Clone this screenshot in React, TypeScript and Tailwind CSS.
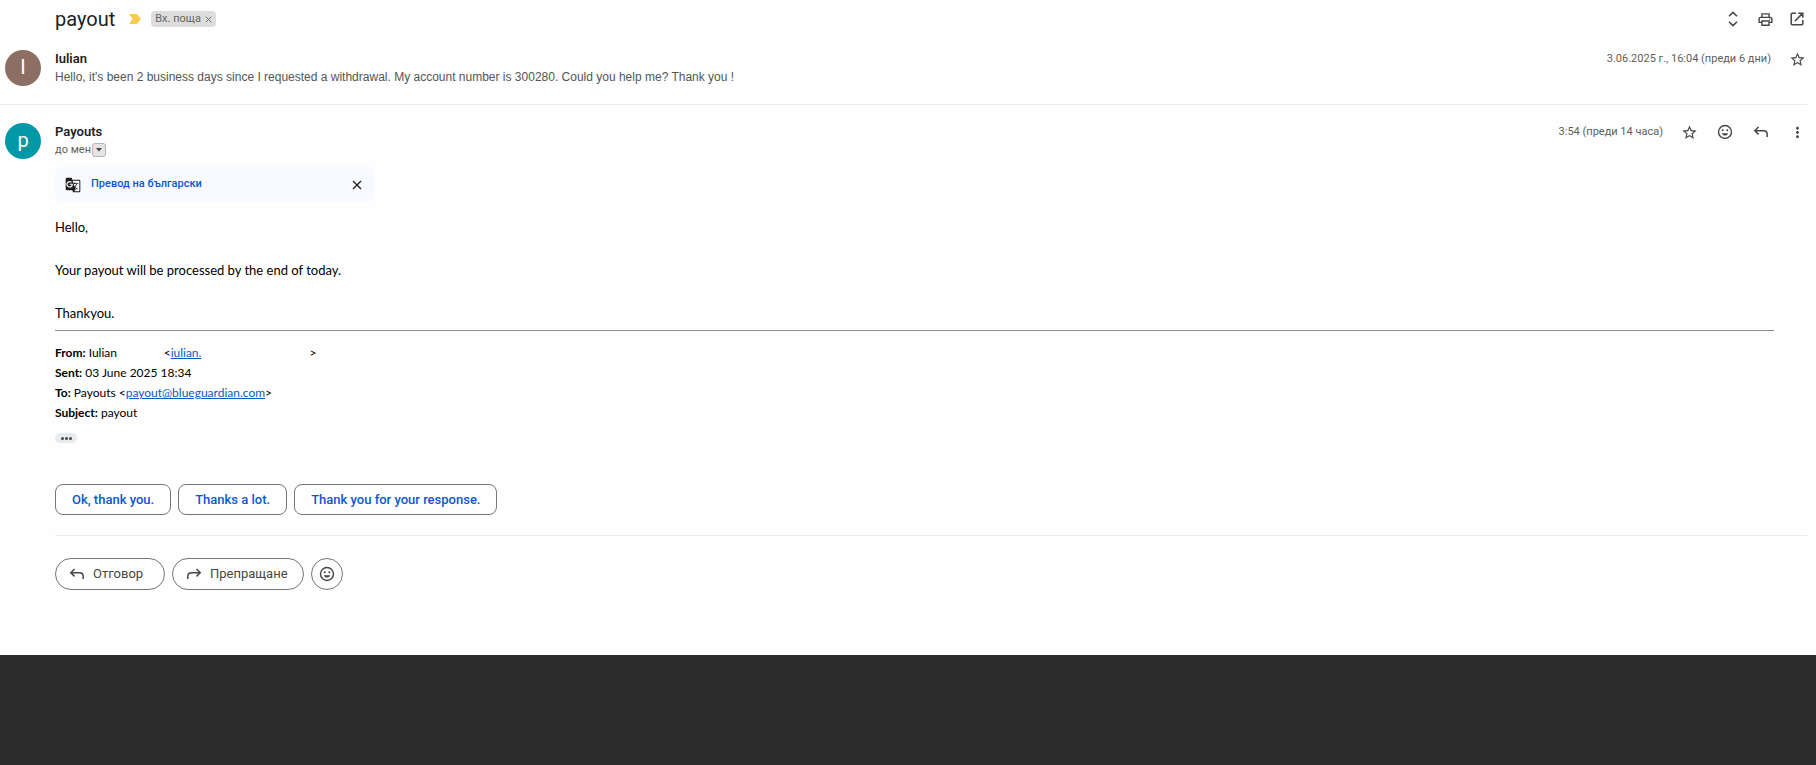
import type { ReactNode } from 'react';
import { MdGTranslate, MdMoreVert, MdOutlinePrint, MdStarBorder } from 'react-icons/md';

const uiFont = "font-['Roboto','Open_Sans',sans-serif]";
const mailFont = "font-['Lato','Liberation_Sans',sans-serif]";

const quickReplies = ['Ok, thank you.', 'Thanks a lot.', 'Thank you for your response.'];

const ReplyIcon = ({ flip = false }: { flip?: boolean }) => (
  <svg
    viewBox="0 0 20 20"
    className={flip ? 'size-5 -scale-x-100' : 'size-5'}
    fill="none"
    stroke="currentColor"
    strokeWidth="1.5"
    aria-hidden="true"
  >
    <path d="M7.5 5 3.8 8.7l3.7 3.7M4 8.7h8.5c2.2 0 3.7 1.5 3.7 3.7V15" />
  </svg>
);

const UnfoldIcon = () => (
  <svg viewBox="0 0 20 20" className="size-5" fill="none" stroke="currentColor" strokeWidth="1.5" aria-hidden="true">
    <path d="M6 7.2 10 3.4l4 3.8M6 12.8l4 3.8 4-3.8" />
  </svg>
);

const OpenIcon = () => (
  <svg viewBox="0 0 20 20" className="size-5" fill="none" stroke="currentColor" strokeWidth="1.5" aria-hidden="true">
    <path d="M9 4.2H5.2a1 1 0 0 0-1 1v9.6a1 1 0 0 0 1 1h9.6a1 1 0 0 0 1-1V11M11.2 4.2h4.6v4.6M15.6 4.4 8 12" />
  </svg>
);

const EmojiIcon = () => (
  <svg viewBox="0 0 20 20" className="size-5" aria-hidden="true">
    <circle cx="10" cy="10" r="6.5" fill="none" stroke="currentColor" strokeWidth="1.4" />
    <circle cx="7.7" cy="8.2" r="1" fill="currentColor" />
    <circle cx="12.3" cy="8.2" r="1" fill="currentColor" />
    <path d="M6.8 11.2h6.4c-.6 1.500-1.700 2.300-3.200 2.300s-2.600-.8-3.200-2.300z" fill="currentColor" />
  </svg>
);

const CloseIcon = ({ className }: { className: string }) => (
  <svg viewBox="0 0 10 10" className={className} fill="none" stroke="currentColor" strokeWidth="1.3" aria-hidden="true">
    <path d="m1 1 8 8M9 1 1 9" />
  </svg>
);

const ImportantIcon = () => (
  <svg viewBox="0 0 12 10" className="h-[10px] w-3" aria-hidden="true">
    <path d="M0 0h7.5a1 1 0 0 1 .8.4L12 5 8.3 9.6a1 1 0 0 1-.8.4H0l3.6-5z" fill="#f7cb4d" />
  </svg>
);

const IconButton = ({ label, children }: { label: string; children: ReactNode }) => (
  <button type="button" aria-label={label} className="flex size-5 items-center justify-center text-[#444746]">
    {children}
  </button>
);

const Avatar = ({ letter, color }: { letter: string; color: string }) => (
  <div className={`flex size-9 shrink-0 items-center justify-center rounded-full pb-[2px] text-xl text-white ${color}`}>
    {letter}
  </div>
);

const App = () => {
  return (
    <div lang="bg" className={`flex min-h-screen flex-col bg-[#2b2b2b] text-[#1f1f1f] ${uiFont}`}>
      <main className="bg-[#fefefe] pr-[9px] pb-[65px]">
        <header className="flex h-[38px] items-center pl-[55px]">
          <h1 className="text-xl leading-6">payout</h1>
          <span className="ml-[14px]">
            <ImportantIcon />
          </span>
          <div className="ml-[10px] flex h-4 items-center gap-1 rounded bg-[#dddddd] px-1 text-[11px] text-[#666666]">
            <span>Вх. поща</span>
            <button type="button" aria-label="Премахване на етикета">
              <CloseIcon className="size-[7px]" />
            </button>
          </div>
          <div className="ml-auto flex gap-3">
            <IconButton label="Разгъване">
              <UnfoldIcon />
            </IconButton>
            <IconButton label="Печат">
              <MdOutlinePrint size={17} />
            </IconButton>
            <IconButton label="Нов прозорец">
              <OpenIcon />
            </IconButton>
          </div>
        </header>

        <article className="flex h-[67px] border-b border-[#ebebeb] pt-3 pl-[5px]">
          <Avatar letter="I" color="bg-[#8d6e63]" />
          <div className="ml-[14px]">
            <h2 className="text-[13px] leading-[18px] font-semibold">Iulian</h2>
            <p className="font-['Liberation_Sans',sans-serif] text-xs leading-[18px] text-[#555555]">
              Hello, it's been 2 business days since I requested a withdrawal. My account number is 300280. Could you
              help me? Thank you !
            </p>
          </div>
          <div className="ml-auto flex h-[18px] items-center gap-4">
            <time className="text-[11px] text-[#5e5e5e]">3.06.2025 г., 16:04 (преди 6 дни)</time>
            <IconButton label="Със звезда">
              <MdStarBorder size={17} />
            </IconButton>
          </div>
        </article>

        <article>
          <div className="flex pt-[18px] pl-[5px]">
            <Avatar letter="p" color="bg-[#0097a7]" />
            <div className="ml-[14px]">
              <h2 className="text-[13px] leading-[18px] font-semibold">Payouts</h2>
              <div className="flex h-[18px] items-center gap-px text-[11px] text-[#5e5e5e]">
                <span>до мен</span>
                <button
                  type="button"
                  aria-label="Показване на подробностите"
                  className="flex size-[14px] items-center justify-center rounded-[3px] border border-[#b5b5b5] bg-[#e4e4e4]"
                >
                  <svg viewBox="0 0 6 4" className="h-1 w-[6px]" aria-hidden="true">
                    <path d="M0 0h6L3 3.5z" fill="#444746" />
                  </svg>
                </button>
              </div>
            </div>
            <div className="ml-auto flex h-[18px] items-center gap-4">
              <time className="text-[11px] text-[#5e5e5e]">3:54 (преди 14 часа)</time>
              <IconButton label="Със звезда">
                <MdStarBorder size={17} />
              </IconButton>
              <IconButton label="Реакция с емоджи">
                <EmojiIcon />
              </IconButton>
              <IconButton label="Отговор">
                <ReplyIcon />
              </IconButton>
              <IconButton label="Още">
                <MdMoreVert size={17} />
              </IconButton>
            </div>
          </div>

          <div className="pl-[55px]">
            <div className="mt-2 flex h-[35px] w-80 items-center rounded-lg bg-[#f8faff] px-[10px]">
              <MdGTranslate size={16} className="text-[#1f1f1f]" />
              <a href="#translate" className="ml-[10px] text-[11px] font-medium text-[#0b57d0]">
                Превод на български
              </a>
              <button type="button" aria-label="Затваряне" className="ml-auto p-[3px] text-[#1f1f1f]">
                <CloseIcon className="size-[10px]" />
              </button>
            </div>

            <div className={`mr-[33px] border-b border-[#8f8f8f] pt-[14px] pb-[6px] text-[13px] text-black ${mailFont}`}>
              <p className="leading-[22px]">Hello,</p>
              <p className="mt-[21px] leading-[22px]">Your payout will be processed by the end of today.</p>
              <p className="mt-[21px] leading-[22px]">Thankyou.</p>
            </div>

            <div className={`mt-3 text-xs leading-5 text-black ${mailFont}`}>
              <p className="flex">
                <b className="mr-[3px]">From:</b>
                <span className="w-[75px]">Iulian</span>
                &lt;
                <a href="#iulian" className="text-[#1155cc] underline">
                  iulian.
                </a>
                <span className="ml-[108px]">&gt;</span>
              </p>
              <p>
                <b>Sent:</b> 03 June 2025 18:34
              </p>
              <p>
                <b>To:</b> Payouts &lt;
                <a href="mailto:payout@blueguardian.com" className="text-[#1155cc] underline">
                  payout@blueguardian.com
                </a>
                &gt;
              </p>
              <p>
                <b>Subject:</b> payout
              </p>
            </div>

            <button
              type="button"
              aria-label="Показване на съкратеното съдържание"
              className="mt-[10px] flex h-[10px] w-[22px] items-center justify-center gap-px rounded-full bg-[#e8eaed]"
            >
              <span className="size-[3px] rounded-full bg-[#444746]" />
              <span className="size-[3px] rounded-full bg-[#444746]" />
              <span className="size-[3px] rounded-full bg-[#444746]" />
            </button>

            <div className="mt-[41px] flex gap-[7px]">
              {quickReplies.map((reply) => (
                <button
                  key={reply}
                  type="button"
                  className="h-[31px] rounded-lg border border-[#747775] px-4 text-[13px] font-medium text-[#0b57d0]"
                >
                  {reply}
                </button>
              ))}
            </div>

            <div className="mt-5 flex gap-[7px] border-t border-[#ebebeb] pt-[22px] text-[13px] text-[#444746]">
              <button
                type="button"
                className="flex h-8 min-w-[110px] items-center gap-[6px] rounded-full border border-[#747775] pr-[15px] pl-[11px]"
              >
                <ReplyIcon />
                Отговор
              </button>
              <button
                type="button"
                className="flex h-8 min-w-[110px] items-center gap-[6px] rounded-full border border-[#747775] pr-[15px] pl-[11px]"
              >
                <ReplyIcon flip />
                Препращане
              </button>
              <button
                type="button"
                aria-label="Реакция с емоджи"
                className="flex size-8 items-center justify-center rounded-full border border-[#747775]"
              >
                <EmojiIcon />
              </button>
            </div>
          </div>
        </article>
      </main>
    </div>
  );
};

export default App;
